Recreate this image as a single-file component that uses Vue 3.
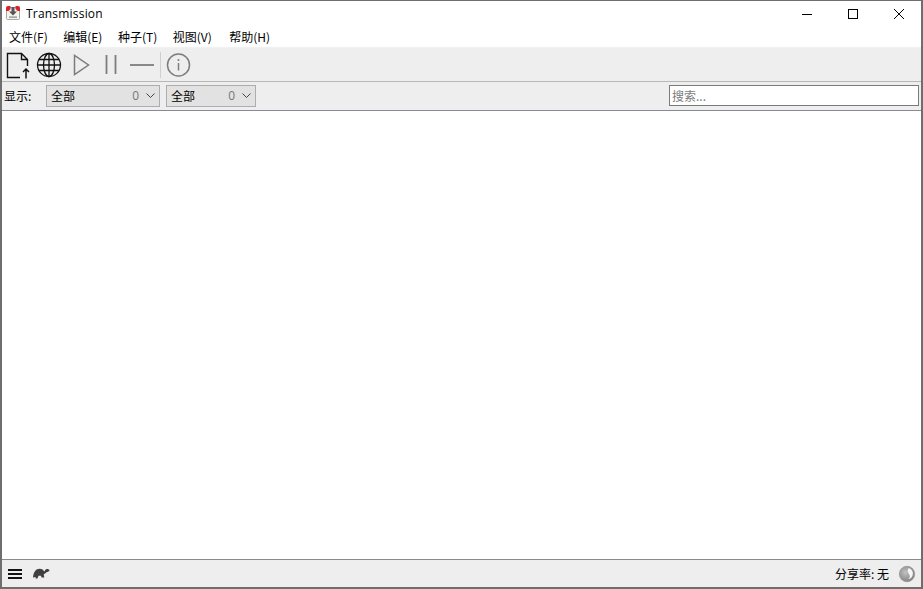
<script setup>
const menus = ['文件(F)', '编辑(E)', '种子(T)', '视图(V)', '帮助(H)']
const filters = [
  { label: '全部', count: 0, cls: 'wide' },
  { label: '全部', count: 0, cls: 'narrow' },
]
</script>

<template>
  <div class="window">
    <header class="titlebar">
      <svg class="appicon" width="16" height="16" viewBox="0 0 16 16">
        <rect x="1.500" y="2.500" width="13" height="12" rx="1" fill="#f6f2ec" stroke="#a8a8a8" />
        <path d="M1 6V3a2 2 0 0 1 2-2h2.500v3l-2 2zM15 6V3a2 2 0 0 0-2-2h-2.500v3l2 2z" fill="#d8232a" />
        <path d="M6.500 2h3v4.500H12L8 10.500 4 6.500h2.500z" fill="#555" />
        <rect x="4" y="11.500" width="8" height="1.200" fill="#888" />
      </svg>
      <span class="title">Transmission</span>
      <div class="winctl">
        <svg width="46" height="25" viewBox="0 0 46 25"><path d="M18 13.500h10" stroke="#000" fill="none" /></svg>
        <svg width="46" height="25" viewBox="0 0 46 25"><rect x="18.500" y="8.500" width="9" height="9" stroke="#000" fill="none" /></svg>
        <svg width="46" height="25" viewBox="0 0 46 25"><path d="M18 8l10 10M28 8L18 18" stroke="#000" fill="none" /></svg>
      </div>
    </header>

    <nav class="menubar">
      <span v-for="m in menus" :key="m" class="menu">{{ m }}</span>
    </nav>

    <div class="toolbar">
      <svg class="tool page" width="30" height="30" viewBox="0 0 30 30">
        <path d="M16 27.500H3.500V3.500H17.500L23.500 9.500V16M17.500 3.500V9.500H23.500" fill="none" stroke="#111" stroke-width="1.400" />
        <path d="M22 28.500V19M19 22l3-3 3 3" fill="none" stroke="#111" stroke-width="1.500" />
      </svg>
      <svg class="tool globe" width="26" height="30" viewBox="0 0 26 30">
        <g fill="none" stroke="#111" stroke-width="1.300">
          <circle cx="13" cy="15" r="11.500" />
          <ellipse cx="13" cy="15" rx="5.500" ry="11.500" />
          <path d="M13 3.500v23M1.500 15h23M3 9.500h20M3 20.500h20" />
        </g>
      </svg>
      <svg class="tool play" width="20" height="30" viewBox="0 0 20 30">
        <path d="M3.500 5.500v19l14-9.500z" fill="none" stroke="#7d7d7d" stroke-width="1.500" />
      </svg>
      <svg class="tool pause" width="14" height="30" viewBox="0 0 14 30">
        <path d="M2.500 5v19M11.500 5v19" stroke="#7d7d7d" stroke-width="1.800" fill="none" />
      </svg>
      <svg class="tool minus" width="26" height="30" viewBox="0 0 26 30">
        <path d="M1 15h24" stroke="#7d7d7d" stroke-width="1.800" fill="none" />
      </svg>
      <span class="sep"></span>
      <svg class="tool info" width="25" height="30" viewBox="0 0 25 30">
        <circle cx="12.500" cy="15" r="11" fill="none" stroke="#7d7d7d" stroke-width="1.500" />
        <circle cx="12.500" cy="10" r="1" fill="#7d7d7d" />
        <path d="M12.500 13v7.500" stroke="#7d7d7d" stroke-width="1.500" fill="none" />
      </svg>
    </div>

    <div class="filterbar">
      <span class="show">显示:</span>
      <div v-for="(f, i) in filters" :key="i" class="select" :class="f.cls">
        <span class="sel-label">{{ f.label }}</span>
        <span class="sel-count">{{ f.count }}</span>
        <svg width="9" height="5" viewBox="0 0 9 5"><path d="M.5.500L4.500 4.500 8.500.500" fill="none" stroke="#444" /></svg>
      </div>
      <input class="search" placeholder="搜索..." />
    </div>

    <main class="list"></main>

    <footer class="statusbar">
      <svg class="burger" width="14" height="10" viewBox="0 0 14 10">
        <path d="M0 1h14M0 5h14M0 9h14" stroke="#111" stroke-width="2" fill="none" />
      </svg>
      <svg class="turtle" width="17" height="11" viewBox="0 0 17 11">
        <path d="M0 9.500C.5 4 3 .8 6.500.8c2.500 0 4 1.200 4.800 2.700.7-.4 1-2.500 2.700-2.500 1.200 0 2.500.6 2.500 1.300 0 1.200-2 1.500-3 2-1 1-1.800 1.700-2.800 2l.6 3.200H8.500L8 7.800H5.500l-1 2.700H2.500l.2-1.500z" fill="#3f3f3f" />
      </svg>
      <span class="ratio">分享率: 无</span>
      <svg class="yin" width="18" height="18" viewBox="0 0 18 18">
        <defs>
          <radialGradient id="yinball" cx="0.4" cy="0.4" r="0.65">
            <stop offset="0" stop-color="#c2c2c2" />
            <stop offset="1" stop-color="#808080" />
          </radialGradient>
        </defs>
        <circle cx="9" cy="9" r="7.700" fill="url(#yinball)" stroke="#8c8c8c" stroke-width="0.600" />
        <path d="M10.500 3c3 .8 4.800 3.500 4.300 6.500-.4 2.500-2.300 4.300-4.800 4.800 1.800-1.400 2.400-3 1.400-4.600-1.100-1.800-2.600-3.500-.9-6.700z" fill="#f6f6f6" />
      </svg>
    </footer>
  </div>
</template>

<style scoped>
.window {
  width: 923px;
  height: 589px;
  box-sizing: border-box;
  display: flex;
  flex-direction: column;
  background: #fff;
  border: 1px solid #6e6e6e;
  border-left-width: 2px;
  border-right-width: 2px;
  border-bottom-width: 2px;
  font-family: "Noto Sans CJK SC", "Noto Sans", sans-serif;
  font-size: 12px;
  color: #000;
  overflow: hidden;
}
.titlebar {
  height: 24px;
  flex: none;
  display: flex;
  align-items: center;
  padding-left: 3px;
}
.appicon { flex: none; }
.title {
  margin-left: 5px;
  font-family: "Open Sans", "Noto Sans", sans-serif;
  font-size: 12px;
  letter-spacing: 0.2px;
}
.winctl {
  margin-left: auto;
  display: flex;
  margin-right: -1px;
}
.menubar {
  height: 23px;
  flex: none;
  display: flex;
  align-items: center;
  padding-left: 7px;
  padding-top: 2px;
  gap: 15.5px;
  border-bottom: 1px solid #f1f1f1;
  box-sizing: border-box;
}
.menu { font-size: 12px; line-height: 16px; }
.menu:last-child { margin-left: 2px; }
.toolbar {
  height: 34px;
  flex: none;
  box-sizing: border-box;
  display: flex;
  align-items: center;
  background: #eeeeee;
  border-bottom: 1px solid #b8b8b8;
  padding: 1px 0 0 2px;
}
.tool { flex: none; }
.page { margin-left: 0; }
.globe { margin-left: 2px; }
.play { margin-left: 9px; }
.pause { margin-left: 13px; }
.minus { margin-left: 11px; }
.sep {
  width: 1px;
  height: 26px;
  background: #cfcfcf;
  margin-left: 5px;
}
.info { margin-left: 5px; }
.filterbar {
  height: 29px;
  flex: none;
  box-sizing: border-box;
  display: flex;
  align-items: center;
  background: #eeeeee;
  border-bottom: 1px solid #8a8a94;
  padding: 0 2px 1px;
}
.show { width: 42px; flex: none; font-size: 12px; }
.select {
  height: 22px;
  box-sizing: border-box;
  display: flex;
  align-items: center;
  background: #e2e2e2;
  border: 1px solid #adadad;
  padding: 0 4px;
  margin-right: 6px;
}
.wide { width: 114px; }
.narrow { width: 90px; }
.sel-label { font-size: 12px; }
.sel-count {
  margin-left: auto;
  margin-right: 7px;
  color: #777;
  font-family: "Open Sans", sans-serif;
  font-size: 12px;
}
.search {
  margin-left: auto;
  width: 250px;
  height: 21px;
  box-sizing: border-box;
  border: 1px solid #7a7a7a;
  border-radius: 0;
  padding: 0 2px;
  font: 12px "Noto Sans CJK SC", "Noto Sans", sans-serif;
  outline: none;
  background: #fff;
}
.search::placeholder { color: #7c7c7c; opacity: 1; }
.list { flex: 1; background: #fff; }
.statusbar {
  height: 28px;
  flex: none;
  box-sizing: border-box;
  display: flex;
  align-items: center;
  background: #eeeeee;
  border-top: 1px solid #8a8a8a;
  padding-left: 6px;
  padding-right: 3px;
}
.turtle { margin-left: 11px; }
.ratio { margin-left: auto; margin-right: 9px; font-size: 12px; }
.yin { margin-right: 2px; }
</style>

<style>
html, body { margin: 0; background: #fff; overflow: hidden; }
</style>
